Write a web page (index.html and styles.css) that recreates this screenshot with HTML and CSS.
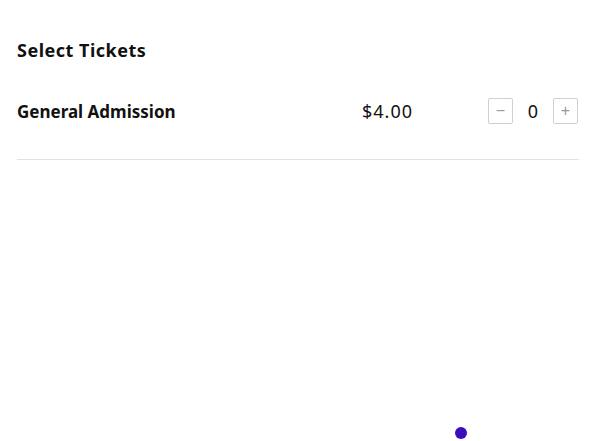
FILE: index.html
```html
<!DOCTYPE html>
<html lang="en">
<head>
    <meta charset="UTF-8">
    <meta name="viewport" content="width=device-width, initial-scale=1.0">
    <title>Select Tickets</title>
    <link rel="stylesheet" href="styles.css">
</head>
<body>
    <div class="tickets">
        <h2 class="tickets-title">Select Tickets</h2>

        <!-- Ticket rows -->
        <div class="ticket-row">
            <span class="ticket-name">General Admission</span>
            <span class="ticket-price">$4.00</span>
            <div class="qty">
                <button type="button" class="qty-btn">&minus;</button>
                <span class="qty-value">0</span>
                <button type="button" class="qty-btn">+</button>
            </div>
        </div>
    </div>

    <div class="loader-dot"></div>
</body>
</html>
```

FILE: styles.css
```css
body {
    font-family: "Noto Sans", Arial, sans-serif;
    background-color: #fff;
    color: #111;
    margin: 0;
    height: 441px;
    position: relative;
}

.tickets {
    padding: 37px 25px 0 17px;
}

.tickets-title {
    font-size: 18px;
    font-weight: bold;
    letter-spacing: 0.5px;
    margin: 0;
    line-height: 26px;
}

.ticket-row {
    display: flex;
    align-items: center;
    margin-top: 35px;
    padding-bottom: 35px;
    border-bottom: 1px solid #e2e2e2;
}

.ticket-name {
    font-size: 17px;
    font-weight: bold;
    width: 345px;
}

.ticket-price {
    font-size: 18px;
    letter-spacing: 1px;
    width: 126px;
}

.qty {
    display: flex;
    align-items: center;
}

.qty-btn {
    width: 25px;
    height: 26px;
    padding: 0;
    border: 1px solid #cfcfcf;
    border-radius: 2px;
    background-color: #fff;
    color: #999;
    font-size: 16px;
    line-height: 1;
    cursor: pointer;
}

.qty-value {
    width: 40px;
    text-align: center;
    font-size: 18px;
}

.loader-dot {
    position: absolute;
    left: 455px;
    top: 427px;
    width: 12px;
    height: 12px;
    border-radius: 50%;
    background-color: #3d0dbd;
}
```
